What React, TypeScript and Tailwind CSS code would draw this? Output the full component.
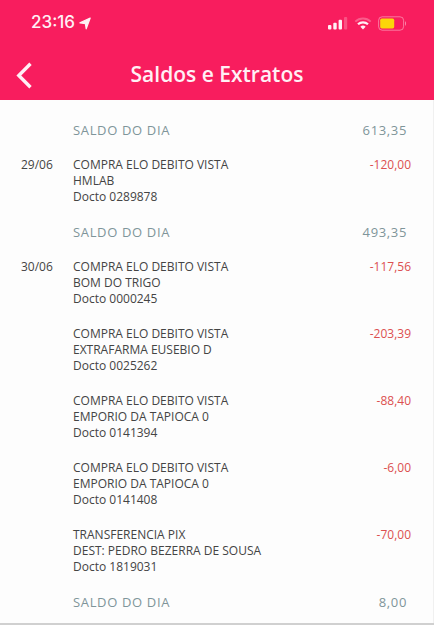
import { Fragment } from "react";

interface Entry {
  title: string;
  detail: string;
  doc: string;
  amount: string;
}

interface Day {
  date: string;
  entries: Entry[];
  balance: string;
}

const previousBalance = "613,35";

const days: Day[] = [
  {
    date: "29/06",
    entries: [
      { title: "COMPRA ELO DEBITO VISTA", detail: "HMLAB", doc: "0289878", amount: "-120,00" },
    ],
    balance: "493,35",
  },
  {
    date: "30/06",
    entries: [
      { title: "COMPRA ELO DEBITO VISTA", detail: "BOM DO TRIGO", doc: "0000245", amount: "-117,56" },
      { title: "COMPRA ELO DEBITO VISTA", detail: "EXTRAFARMA EUSEBIO D", doc: "0025262", amount: "-203,39" },
      { title: "COMPRA ELO DEBITO VISTA", detail: "EMPORIO DA TAPIOCA 0", doc: "0141394", amount: "-88,40" },
      { title: "COMPRA ELO DEBITO VISTA", detail: "EMPORIO DA TAPIOCA 0", doc: "0141408", amount: "-6,00" },
      { title: "TRANSFERENCIA PIX", detail: "DEST: PEDRO BEZERRA DE SOUSA", doc: "1819031", amount: "-70,00" },
    ],
    balance: "8,00",
  },
];

function StatusBar() {
  return (
    <div className="flex h-[46px] items-center justify-between pr-[27px] pl-[31px]">
      <div className="flex items-center gap-1 font-['Inter',sans-serif] text-[17px] font-medium">
        <span>23:16</span>
        <svg width="12" height="13" viewBox="0 0 12 13" fill="currentColor" stroke="currentColor" strokeWidth="1.2" strokeLinejoin="round" aria-hidden="true">
          <path d="M11.2 1 7.2 11.8 6.4 6.6.9 5.8z" />
        </svg>
      </div>
      <div className="flex items-center">
        <svg width="21" height="14" viewBox="0 0 21 14" fill="currentColor" aria-hidden="true">
          <rect x="1" y="9" width="3.4" height="4.5" rx="1" />
          <rect x="6.3" y="6.8" width="3.4" height="6.7" rx="1" />
          <rect x="11.6" y="3.8" width="3.4" height="9.7" rx="1" />
          <rect x="17" y="1" width="3.2" height="12.5" rx="1" opacity="0.25" />
        </svg>
        <svg className="ml-1.5" width="18" height="14" viewBox="0 0 18 14" fill="none" stroke="currentColor" aria-hidden="true">
          <path d="M1.3 5.6a11 11 0 0 1 15.4 0" strokeWidth="2" opacity="0.3" />
          <path d="M4 8.3a7.2 7.2 0 0 1 10 0" strokeWidth="2.2" />
          <path d="M9 13.4 6.4 10.8a3.7 3.7 0 0 1 5.2 0z" fill="currentColor" stroke="none" />
        </svg>
        <svg className="ml-1.5" width="29" height="15" viewBox="0 0 29 15" aria-hidden="true">
          <rect x="0.6" y="0.8" width="25" height="13.4" rx="3.6" fill="none" stroke="#fff" strokeOpacity="0.4" />
          <rect x="2.2" y="2.6" width="14" height="9.8" rx="1.6" fill="#fbd60a" />
          <path d="M27 5.2c1.4.5 1.4 4.1 0 4.6z" fill="#fff" opacity="0.45" />
        </svg>
      </div>
    </div>
  );
}

function BalanceRow({ value }: { value: string }) {
  return (
    <div className="flex justify-between pr-1 pl-[52px] text-[13px] leading-[16px] tracking-wider text-[#7f959a]">
      <span>SALDO DO DIA</span>
      <span>{value}</span>
    </div>
  );
}

function EntryRow({ entry, date }: { entry: Entry; date?: string }) {
  return (
    <li className="flex">
      <span className="w-[52px] shrink-0">{date}</span>
      <div className="flex-1">
        <p>{entry.title}</p>
        <p>{entry.detail}</p>
        <p>Docto {entry.doc}</p>
      </div>
      <span className="text-[#dc5050]">{entry.amount}</span>
    </li>
  );
}

export default function App() {
  return (
    <div className="border-b-2 border-[#d0d0d0] bg-[#fdfdfd] font-['Open_Sans',sans-serif] text-[#444]">
      <header className="bg-[#f81d5e] text-[#fff0f5]">
        <StatusBar />
        <div className="grid h-[54px] grid-cols-[48px_1fr_48px] items-center pt-1">
          <button type="button" aria-label="Voltar" className="flex h-full items-center pl-4">
            <svg width="17" height="27" viewBox="0 0 17 27" fill="none" stroke="currentColor" strokeWidth="3.4" aria-hidden="true">
              <path d="M14.5 1.8 2.8 13.5 14.5 25.2" />
            </svg>
          </button>
          <h1 className="text-center text-[21px] font-semibold">Saldos e Extratos</h1>
        </div>
      </header>

      <main className="flex flex-col gap-[19px] border-r border-[#f0f0f0] pt-[22px] pr-[22px] pb-[13px] pl-[21px] text-[12px] leading-[16px]">
        <BalanceRow value={previousBalance} />
        {days.map((day) => (
          <Fragment key={day.date}>
            <ul className="flex flex-col gap-[19px]">
              {day.entries.map((entry, index) => (
                <EntryRow key={entry.doc} entry={entry} date={index === 0 ? day.date : undefined} />
              ))}
            </ul>
            <BalanceRow value={day.balance} />
          </Fragment>
        ))}
      </main>
    </div>
  );
}
